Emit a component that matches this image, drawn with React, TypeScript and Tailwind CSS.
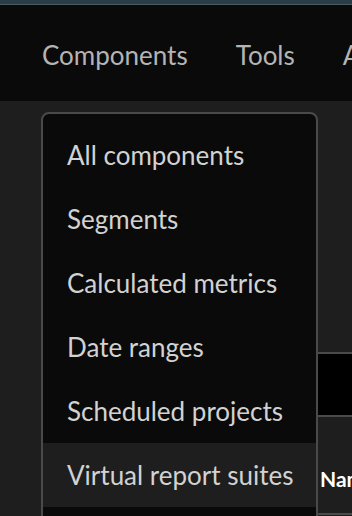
import React from 'react';

const menuItems = [
  'All components',
  'Segments',
  'Calculated metrics',
  'Date ranges',
  'Scheduled projects',
  'Virtual report suites',
];

export default function App() {
  return (
    <div
      className="relative w-[352px] h-[516px] overflow-hidden bg-[#0a0a0a] flex flex-col"
      style={{ fontFamily: 'Lato, "Open Sans", sans-serif' }}
    >
      {/* Top strip */}
      <div className="h-[4px] bg-[#2b3e47]" />
      <div className="h-[1px] bg-[#4c5c63]" />

      {/* Nav */}
      <nav className="h-[96px] flex items-center pl-[42px] pt-[4px] gap-[48px] text-[26px] text-[#b4b4b4] whitespace-nowrap">
        <span>Components</span>
        <span>Tools</span>
        <span>Administration</span>
      </nav>

      {/* Body */}
      <div className="flex-1 bg-[#1e1e1e] flex pt-[3px]">
        <div className="ml-[12px] w-[4px] bg-[#464646]" />
        <div className="flex-1 flex flex-col pl-[302px]">
          <div className="h-[248px]" />
          <div className="h-[2px] bg-[#4a4a4a]" />
          <div className="h-[61px] bg-black" />
          <div className="h-[2px] bg-[#4a4a4a]" />
          <div className="h-[96px] flex items-center pl-[6px] pt-[28px] text-[21px] font-bold text-white whitespace-nowrap">
            Name
          </div>
          <div className="h-[2px] bg-[#4a4a4a]" />
        </div>
      </div>

      {/* Dropdown menu */}
      <div className="absolute left-[41px] top-[112px] w-[277px] h-[420px] rounded-[8px] border-2 border-[#4a4a4a] bg-[#0a0a0a] pt-[9px]">
        {menuItems.map((item, index) => (
          <div
            key={index}
            className={`h-[64px] flex items-center pl-[24px] text-[26px] text-[#d2d2d2] whitespace-nowrap ${
              index === menuItems.length - 1 ? 'bg-[#1e1e1e]' : ''
            }`}
          >
            {item}
          </div>
        ))}
      </div>
    </div>
  );
}
